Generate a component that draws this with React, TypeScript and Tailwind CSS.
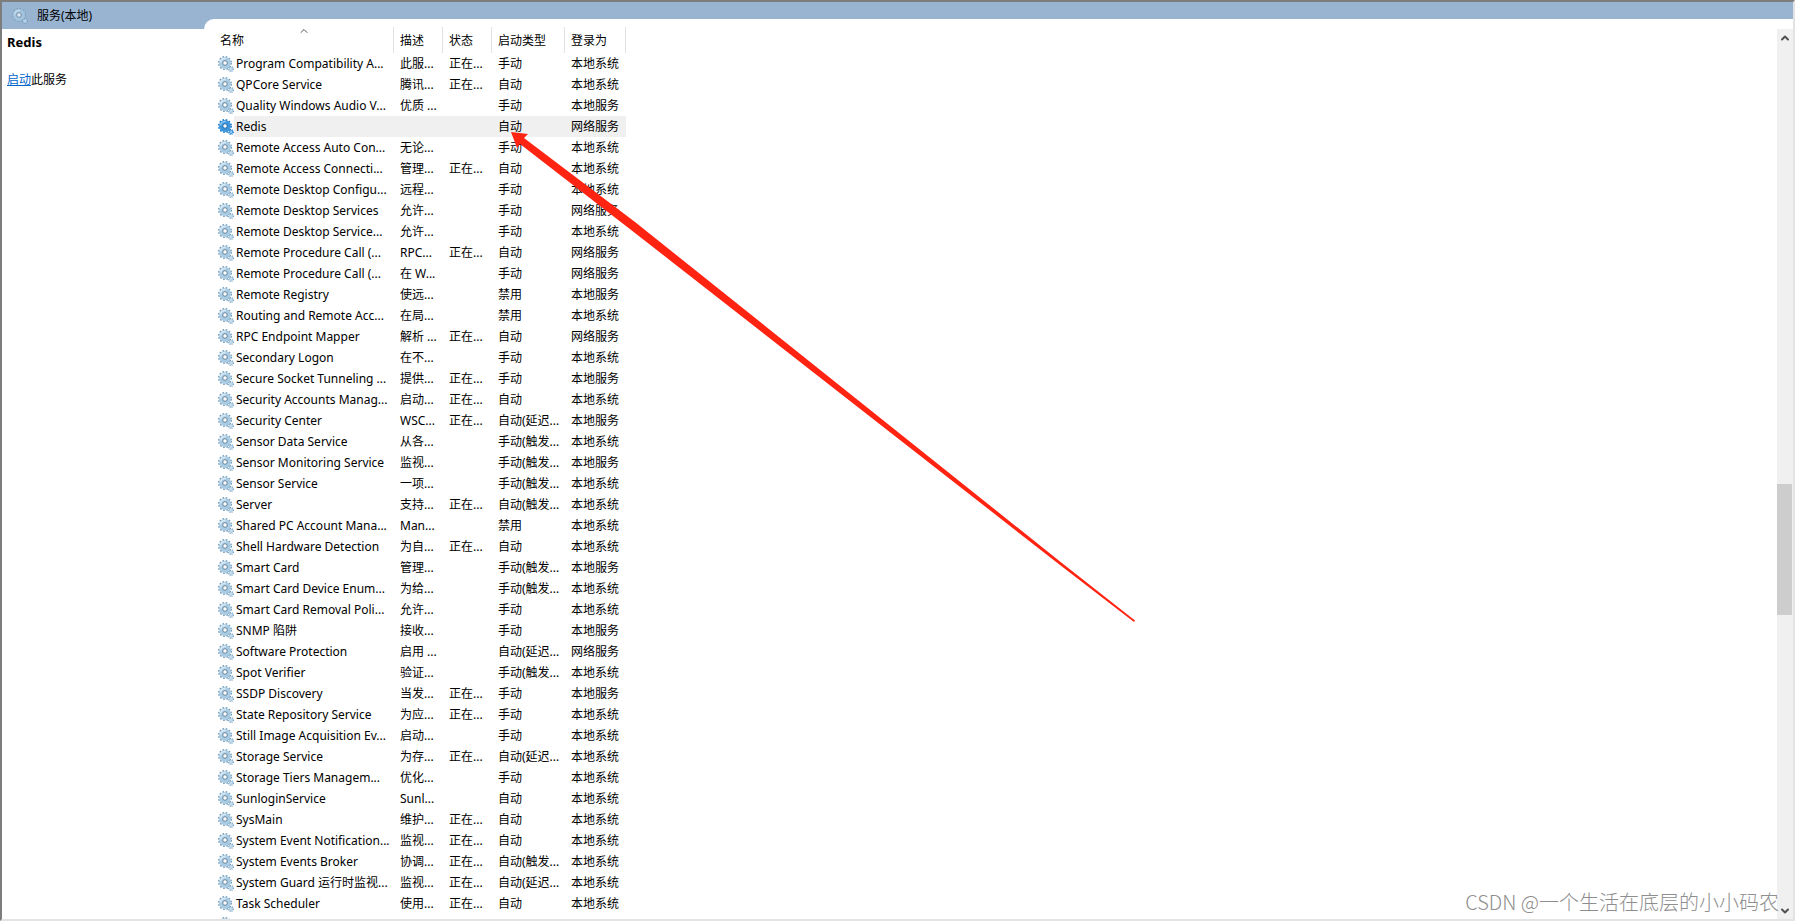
import { useState } from "react";
import { ChevronDown, ChevronUp } from "lucide-react";

type Service = [name: string, description: string, status: string, startup: string, logOn: string];

const RUNNING = "正在...";
const MANUAL = "手动";
const AUTO = "自动";
const DISABLED = "禁用";
const MANUAL_TRIGGER = "手动(触发...";
const AUTO_TRIGGER = "自动(触发...";
const AUTO_DELAYED = "自动(延迟...";
const SYSTEM = "本地系统";
const LOCAL = "本地服务";
const NETWORK = "网络服务";

const services: Service[] = [
    ["Program Compatibility A...", "此服...", RUNNING, MANUAL, SYSTEM],
    ["QPCore Service", "腾讯...", RUNNING, AUTO, SYSTEM],
    ["Quality Windows Audio V...", "优质 ...", "", MANUAL, LOCAL],
    ["Redis", "", "", AUTO, NETWORK],
    ["Remote Access Auto Con...", "无论...", "", MANUAL, SYSTEM],
    ["Remote Access Connecti...", "管理...", RUNNING, AUTO, SYSTEM],
    ["Remote Desktop Configu...", "远程...", "", MANUAL, SYSTEM],
    ["Remote Desktop Services", "允许...", "", MANUAL, NETWORK],
    ["Remote Desktop Service...", "允许...", "", MANUAL, SYSTEM],
    ["Remote Procedure Call (...", "RPC...", RUNNING, AUTO, NETWORK],
    ["Remote Procedure Call (...", "在 W...", "", MANUAL, NETWORK],
    ["Remote Registry", "使远...", "", DISABLED, LOCAL],
    ["Routing and Remote Acc...", "在局...", "", DISABLED, SYSTEM],
    ["RPC Endpoint Mapper", "解析 ...", RUNNING, AUTO, NETWORK],
    ["Secondary Logon", "在不...", "", MANUAL, SYSTEM],
    ["Secure Socket Tunneling ...", "提供...", RUNNING, MANUAL, LOCAL],
    ["Security Accounts Manag...", "启动...", RUNNING, AUTO, SYSTEM],
    ["Security Center", "WSC...", RUNNING, AUTO_DELAYED, LOCAL],
    ["Sensor Data Service", "从各...", "", MANUAL_TRIGGER, SYSTEM],
    ["Sensor Monitoring Service", "监视...", "", MANUAL_TRIGGER, LOCAL],
    ["Sensor Service", "一项...", "", MANUAL_TRIGGER, SYSTEM],
    ["Server", "支持...", RUNNING, AUTO_TRIGGER, SYSTEM],
    ["Shared PC Account Mana...", "Man...", "", DISABLED, SYSTEM],
    ["Shell Hardware Detection", "为自...", RUNNING, AUTO, SYSTEM],
    ["Smart Card", "管理...", "", MANUAL_TRIGGER, LOCAL],
    ["Smart Card Device Enum...", "为给...", "", MANUAL_TRIGGER, SYSTEM],
    ["Smart Card Removal Poli...", "允许...", "", MANUAL, SYSTEM],
    ["SNMP 陷阱", "接收...", "", MANUAL, LOCAL],
    ["Software Protection", "启用 ...", "", AUTO_DELAYED, NETWORK],
    ["Spot Verifier", "验证...", "", MANUAL_TRIGGER, SYSTEM],
    ["SSDP Discovery", "当发...", RUNNING, MANUAL, LOCAL],
    ["State Repository Service", "为应...", RUNNING, MANUAL, SYSTEM],
    ["Still Image Acquisition Ev...", "启动...", "", MANUAL, SYSTEM],
    ["Storage Service", "为存...", RUNNING, AUTO_DELAYED, SYSTEM],
    ["Storage Tiers Managem...", "优化...", "", MANUAL, SYSTEM],
    ["SunloginService", "Sunl...", "", AUTO, SYSTEM],
    ["SysMain", "维护...", RUNNING, AUTO, SYSTEM],
    ["System Event Notification...", "监视...", RUNNING, AUTO, SYSTEM],
    ["System Events Broker", "协调...", RUNNING, AUTO_TRIGGER, SYSTEM],
    ["System Guard 运行时监视...", "监视...", RUNNING, AUTO_DELAYED, SYSTEM],
    ["Task Scheduler", "使用...", RUNNING, AUTO, SYSTEM],
    ["", "", "", "", ""],
];

const columns = ["名称", "描述", "状态", "启动类型", "登录为"];

function GearIcon({ active = false, faded = false }: { active?: boolean; faded?: boolean }) {
    const teeth = active ? "#1478c8" : "#7099b8";
    const body = active ? "#3d95dc" : "#a9cbe3";
    const rim = active ? "#0a5ea8" : "#5f7f98";

    return (
        <svg viewBox="0 0 16 16" className={`size-4 shrink-0 ${faded ? "opacity-70" : ""}`} aria-hidden="true">
            <circle cx="7" cy="7" r="6.2" fill="none" stroke={teeth} strokeWidth="1.6" strokeDasharray="1.62 1.62" />
            <circle cx="7" cy="7" r="4.2" fill="none" stroke={body} strokeWidth="3.6" />
            <path d="M2.6 6.4A4.6 4.6 0 0 1 7.8 2.5" fill="none" stroke={active ? "#8cc6f2" : "#dcebf6"} strokeWidth="1.6" />
            <circle cx="7" cy="7" r="2.3" fill="#fff" stroke={rim} strokeWidth="1" />
            <circle cx="13" cy="13" r="2.4" fill="none" stroke={teeth} strokeWidth="1.2" strokeDasharray="0.94 0.94" />
            <circle cx="13" cy="13" r="1.5" fill={active ? "#b9dcf7" : "#d3e4f0"} stroke={body} strokeWidth="1.2" />
        </svg>
    );
}

export default function App() {
    const [selected, setSelected] = useState(3);

    return (
        <div className="relative flex h-screen overflow-hidden border-t-2 border-r-2 border-b-2 border-l-2 border-t-[#7d7d7d] border-r-[#e3e3e3] border-b-[#e3e3e3] border-l-[#7d7d7d] bg-white font-['Noto_Sans','Noto_Sans_CJK_SC',sans-serif] text-xs text-black">
            <aside className="flex w-[202px] shrink-0 flex-col">
                <header className="flex h-[27px] items-center gap-[9px] bg-[#99b4d1] pl-2.5">
                    <GearIcon faded />
                    <h1>服务(本地)</h1>
                </header>
                <div className="flex flex-col gap-5 px-[5px] pt-1">
                    <h2 className="text-[13px] leading-[18px] font-bold">Redis</h2>
                    <p className="leading-[18px]">
                        <a href="#start" className="text-[#0066cc] underline">启动</a>此服务
                    </p>
                </div>
            </aside>

            <main className="flex min-w-0 flex-1 flex-col bg-[#99b4d1] pt-[17px]">
                <div className="flex min-h-0 flex-1 rounded-tl-[10px] bg-white">
                    <div className="min-w-0 flex-1 overflow-hidden">
                        <table className="w-[422px] table-fixed border-collapse text-left whitespace-nowrap">
                            <colgroup>
                                <col className="w-[190px]" />
                                <col className="w-[49px]" />
                                <col className="w-[49px]" />
                                <col className="w-[73px]" />
                                <col className="w-[61px]" />
                            </colgroup>
                            <thead>
                                <tr className="h-[34px]">
                                    {columns.map((column, i) => (
                                        <th key={column} className="p-0 pt-2 align-top font-normal">
                                            <button
                                                className={`relative flex h-[26px] w-full items-center border-r border-[#e2e2e2] pt-0.5 ${i === 0 ? "pl-4" : "pl-1.5"}`}
                                            >
                                                {column}
                                                {i === 0 && (
                                                    <ChevronUp className="absolute -top-0.5 left-[94px] size-3 text-[#555]" strokeWidth={2} />
                                                )}
                                            </button>
                                        </th>
                                    ))}
                                </tr>
                            </thead>
                            <tbody>
                                {services.map(([name, ...details], i) => (
                                    <tr key={i} onClick={() => setSelected(i)} className="h-[21px]">
                                        <td className="p-0">
                                            <div className="flex items-center pl-3.5">
                                                <GearIcon active={i === selected} />
                                                <span className={`h-[21px] flex-1 pl-0.5 leading-[21px] ${i === selected ? "bg-[#f0f0f0]" : ""}`}>
                                                    {name}
                                                </span>
                                            </div>
                                        </td>
                                        {details.map((text, j) => (
                                            <td key={j} className={`p-0 pl-1.5 leading-[21px] ${i === selected ? "bg-[#f0f0f0]" : ""}`}>
                                                {text}
                                            </td>
                                        ))}
                                    </tr>
                                ))}
                            </tbody>
                        </table>
                    </div>

                    {/* Scroll bar */}
                    <div className="mt-2.5 flex w-4 shrink-0 flex-col bg-[#f0f0f0]">
                        <button aria-label="向上滚动" className="flex h-[17px] items-center justify-center text-[#505050]">
                            <ChevronUp className="size-3" strokeWidth={4} />
                        </button>
                        <div className="flex-[438]" />
                        <div className="mr-px flex-[131] bg-[#cdcdcd]" />
                        <div className="flex-[287]" />
                        <button aria-label="向下滚动" className="flex h-[17px] items-center justify-center text-[#505050]">
                            <ChevronDown className="size-3" strokeWidth={4} />
                        </button>
                    </div>
                </div>
            </main>

            {/* Arrow pointing at the selected startup type */}
            <svg
                viewBox="0 0 626 492"
                className="pointer-events-none absolute top-[129px] left-[508px] h-[492px] w-[626px]"
                aria-hidden="true"
            >
                <path d="M1 1L18 3L14 7L125 91L550 430.5L625 489.5L624 491L550 434L125 102L10 13L7 17Z" fill="#ff2312" />
            </svg>

            <p className="pointer-events-none absolute right-3.5 bottom-0.5 font-['Noto_Sans_CJK_SC',sans-serif] text-xl leading-[30px] font-light text-[#8e8e8e]">
                CSDN @一个生活在底层的小小码农
            </p>
        </div>
    );
}
